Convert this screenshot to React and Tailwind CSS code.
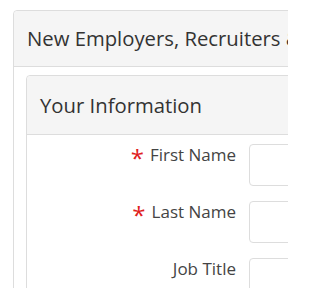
export default function App() {
  const rows = [
    { label: 'First Name', required: true },
    { label: 'Last Name', required: true },
    { label: 'Job Title', required: false },
  ];

  return (
    <div className="w-[288px] h-[288px] overflow-hidden bg-white font-['Open_Sans',sans-serif] text-[#333]">
      <div className="ml-[13px] mt-[10px] w-[700px] border border-[#ddd] rounded-[4px]">
        <div className="h-[56px] flex items-center px-[13px] bg-[#f5f5f5] border-b border-[#ddd] rounded-t-[4px] text-[20.3px] whitespace-nowrap">
          New Employers, Recruiters &amp; Staffing Agencies
        </div>
        <div className="px-[12px] pt-[8px]">
          <div className="border border-[#ddd] rounded-[4px]">
            <div className="h-[59px] flex items-center px-[13px] bg-[#f5f5f5] border-b border-[#ddd] rounded-t-[4px] text-[20.3px]">
              Your Information
            </div>
            <div className="pt-[9px] flex flex-col gap-[15px]">
              {rows.map((r) => (
                <div key={r.label} className="flex items-start">
                  <label className="w-[222px] shrink-0 pr-[13px] text-right text-[17px] text-[#444] leading-[22px] whitespace-nowrap">
                    {r.required && <span className="text-[#e02020] text-[24px] leading-[22px] mr-[6px] align-[-6px]">*</span>}
                    {r.label}
                  </label>
                  <input className="w-[300px] h-[42px] border border-[#ddd] rounded-[4px] bg-white outline-none" />
                </div>
              ))}
            </div>
          </div>
        </div>
      </div>
    </div>
  );
}
